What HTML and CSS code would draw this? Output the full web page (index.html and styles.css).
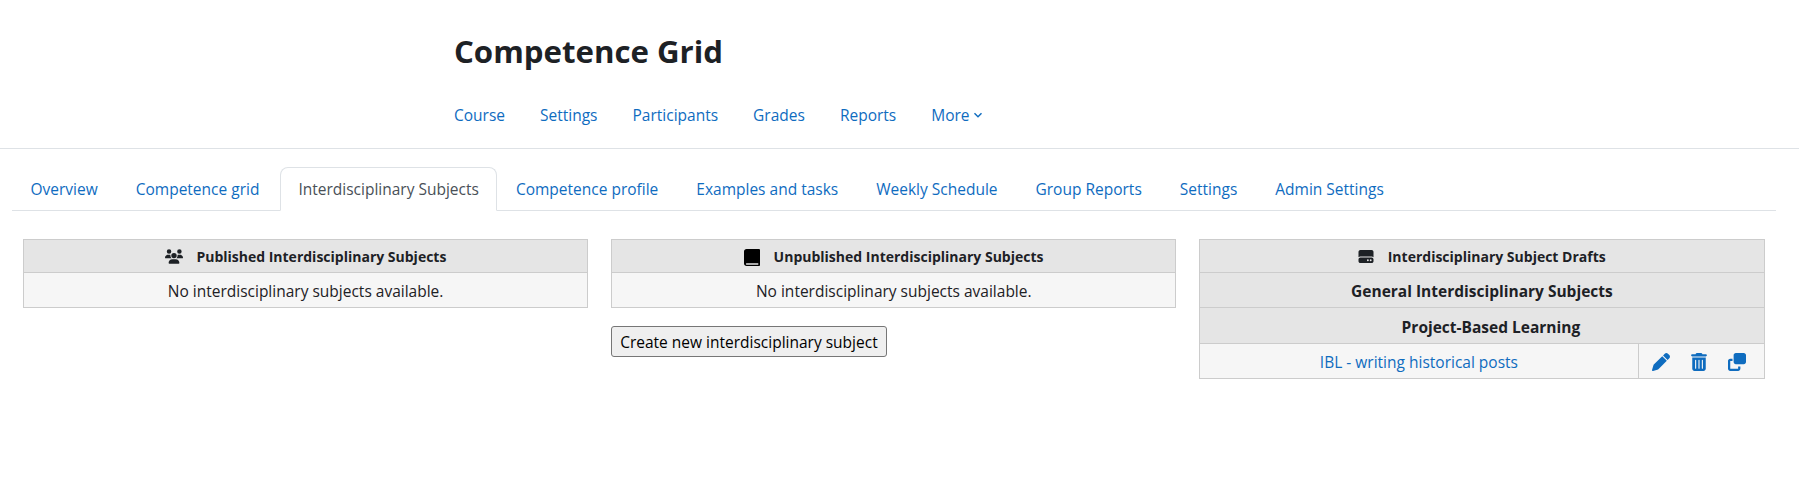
FILE: index.html
```html
<!DOCTYPE html>
<html lang="en">
<head>
<meta charset="utf-8">
<title>Competence Grid</title>
<link rel="stylesheet" href="styles.css">
</head>
<body>
<header class="page-header">
  <h1 class="title">Competence Grid</h1>
  <nav class="course-nav">
    <a href="#">Course</a>
    <a href="#">Settings</a>
    <a href="#">Participants</a>
    <a href="#">Grades</a>
    <a href="#">Reports</a>
    <a href="#" class="more">More
      <svg class="chev" viewBox="0 0 10 10"><path d="M1.5 3.2 5 6.8l3.5-3.6" fill="none" stroke="currentColor" stroke-width="1.4"/></svg>
    </a>
  </nav>
</header>
<main class="content">
  <ul class="tabs">
    <li><a href="#">Overview</a></li>
    <li><a href="#">Competence grid</a></li>
    <li class="active"><a href="#">Interdisciplinary Subjects</a></li>
    <li><a href="#">Competence profile</a></li>
    <li><a href="#">Examples and tasks</a></li>
    <li><a href="#">Weekly Schedule</a></li>
    <li><a href="#">Group Reports</a></li>
    <li><a href="#">Settings</a></li>
    <li><a href="#">Admin Settings</a></li>
  </ul>
  <div class="columns">
    <section>
      <table class="grid">
        <tr class="row-main"><th>
          <svg class="ico ico-users" viewBox="0 0 640 512"><path d="M144 0a80 80 0 1 1 0 160A80 80 0 1 1 144 0zM512 0a80 80 0 1 1 0 160A80 80 0 1 1 512 0zM0 298.7C0 239.8 47.8 192 106.7 192h42.7c15.9 0 31 3.5 44.6 9.7c-1.3 7.2-1.9 14.7-1.9 22.3c0 38.2 16.8 72.5 43.3 96c-.2 0-.4 0-.7 0H21.3C9.6 320 0 310.4 0 298.7zM405.3 320c-.2 0-.4 0-.7 0c26.6-23.5 43.3-57.8 43.3-96c0-7.6-.7-15-1.9-22.3c13.6-6.3 28.7-9.7 44.6-9.7h42.7C592.2 192 640 239.8 640 298.7c0 11.8-9.6 21.3-21.3 21.3H405.3zM224 224a96 96 0 1 1 192 0 96 96 0 1 1 -192 0zM128 485.3C128 411.7 187.7 352 261.3 352H378.7C452.3 352 512 411.7 512 485.3c0 14.7-11.9 26.7-26.7 26.7H154.7c-14.7 0-26.7-11.9-26.7-26.7z"/></svg>
          Published Interdisciplinary Subjects</th></tr>
        <tr class="row-body"><td>No interdisciplinary subjects available.</td></tr>
      </table>
    </section>
    <section>
      <table class="grid">
        <tr class="row-main"><th>
          <svg class="ico ico-book" viewBox="0 0 448 512" preserveAspectRatio="none"><path d="M72 0C32 0 0 32 0 72V440c0 40 32 72 72 72H416c17.7 0 32-14.3 32-32V32c0-17.7-14.3-32-32-32H72zm0 432H400v40H72c-11 0-20-9-20-20s9-20 20-20z"/></svg>
          Unpublished Interdisciplinary Subjects</th></tr>
        <tr class="row-body"><td>No interdisciplinary subjects available.</td></tr>
      </table>
      <button class="create" type="button">Create new interdisciplinary subject</button>
    </section>
    <section>
      <table class="grid">
        <tr class="row-main"><th colspan="2">
          <svg class="ico ico-hdd" viewBox="0 0 512 512"><path d="M0 96C0 60.7 28.7 32 64 32H448c35.3 0 64 28.7 64 64V280.4c-17-15.2-39.4-24.4-64-24.4H64c-24.6 0-47 9.2-64 24.4V96zM64 288H448c35.3 0 64 28.7 64 64v64c0 35.3-28.7 64-64 64H64c-35.3 0-64-28.7-64-64V352c0-35.3 28.7-64 64-64zM320 416a32 32 0 1 0 0-64 32 32 0 1 0 0 64zm128-32a32 32 0 1 0 -64 0 32 32 0 1 0 64 0z"/></svg>
          Interdisciplinary Subject Drafts</th></tr>
        <tr class="row-sub"><th colspan="2">General Interdisciplinary Subjects</th></tr>
        <tr class="row-sub tall"><th colspan="2">Project-Based Learning</th></tr>
        <tr class="row-body">
          <td class="name"><a href="#">IBL - writing historical posts</a></td>
          <td class="actions">
            <div class="action-list">
              <a href="#" aria-label="Edit"><svg viewBox="0 0 512 512"><path d="M362.7 19.3L314.3 67.7 444.3 197.7l48.4-48.4c25-25 25-65.5 0-90.5L453.3 19.3c-25-25-65.5-25-90.5 0zm-71 71L58.6 323.5c-10.4 10.4-18 23.3-22.2 37.4L1 481.2C-1.5 489.7 .8 498.8 7 505s15.3 8.5 23.7 6.1l120.3-35.4c14.1-4.2 27-11.8 37.4-22.2L421.7 220.3 291.7 90.3z"/></svg></a>
              <a href="#" aria-label="Delete"><svg viewBox="0 0 448 512"><path d="M135.2 17.7C140.6 6.8 151.7 0 163.8 0H284.2c12.1 0 23.2 6.8 28.6 17.7L320 32h96c17.7 0 32 14.3 32 32s-14.3 32-32 32H32C14.3 96 0 81.7 0 64S14.3 32 32 32h96l7.2-14.3zM32 128H416V448c0 35.3-28.7 64-64 64H96c-35.3 0-64-28.7-64-64V128zm96 64c-8.8 0-16 7.2-16 16V432c0 8.8 7.2 16 16 16s16-7.2 16-16V208c0-8.8-7.2-16-16-16zm96 0c-8.8 0-16 7.2-16 16V432c0 8.8 7.2 16 16 16s16-7.2 16-16V208c0-8.8-7.2-16-16-16zm96 0c-8.8 0-16 7.2-16 16V432c0 8.8 7.2 16 16 16s16-7.2 16-16V208c0-8.8-7.2-16-16-16z"/></svg></a>
              <a href="#" aria-label="Copy"><svg viewBox="0 0 512 512"><path d="M0 448c0 35.3 28.7 64 64 64H288c35.3 0 64-28.7 64-64V384H288v64H64V224h64V160H64c-35.3 0-64 28.7-64 64V448zm224-128H448c35.3 0 64-28.7 64-64V64c0-35.3-28.7-64-64-64H224c-35.3 0-64 28.7-64 64V256c0 35.3 28.7 64 64 64z"/></svg></a>
            </div>
          </td>
        </tr>
      </table>
    </section>
  </div>
</main>
</body>
</html>
```
FILE: styles.css
```css
* { box-sizing: border-box; }
html, body { margin: 0; padding: 0; }
body {
  background: #fff;
  color: #1d2125;
  font-family: "Open Sans", "Noto Sans", sans-serif;
  font-size: 15.5px;
  line-height: 22px;
  height: 493px;
  overflow: hidden;
}
a { color: #0f6cbf; text-decoration: none; }

.page-header {
  height: 149px;
  padding: 30px 0 0 454px;
  border-bottom: 1px solid #dee2e6;
}
.title {
  margin: 0;
  font-size: 31.2px;
  line-height: 42px;
  font-weight: 700;
}
.course-nav {
  display: flex;
  gap: 35px;
  margin-top: 32px;
}
.more { display: flex; align-items: center; gap: 3px; }
.chev { width: 10px; height: 10px; }

.content { padding: 18px 23px 0 11.5px; }
.tabs {
  display: flex;
  list-style: none;
  margin: 0;
  padding: 0;
  height: 44px;
  border-bottom: 1px solid #dee2e6;
}
.tabs li { height: 44px; border: 1px solid transparent; border-radius: 8px 8px 0 0; }
.tabs a { display: block; padding: 10px 18px 0; }
.tabs .active {
  margin-left: 2px;
  border-color: #dee2e6 #dee2e6 #fff;
  background: #fff;
}
.tabs .active a { color: #495057; padding-left: 17px; padding-right: 17px; }

.columns {
  display: grid;
  grid-template-columns: repeat(3, 1fr);
  gap: 23px;
  margin-top: 28px;
  padding: 0 11.5px;
}
.grid {
  width: 100%;
  border-collapse: collapse;
  text-align: center;
}
.grid th, .grid td { border: 1px solid #ccc; padding: 2px 8px 0; }
.row-main th { height: 33px; font-size: 14px; background: #e5e5e5; }
.row-sub th { height: 35px; font-size: 15.5px; background: #e5e5e5; }
.row-sub.tall th { height: 36px; padding-left: 26px; }
.row-body td { height: 35px; background: #f6f6f6; }
.ico { display: inline-block; vertical-align: -2px; margin-right: 10px; fill: #1d2125; }
.ico-users { width: 18px; height: 15px; }
.ico-book { width: 16px; height: 17px; vertical-align: -4px; fill: #000; }
.ico-hdd { width: 16px; height: 15px; }

.actions { width: 126px; }
.action-list { display: flex; gap: 20px; padding-left: 5px; }
.action-list a { display: flex; }
.action-list svg { width: 18px; height: 18px; fill: #0f6cbf; }

.create {
  display: block;
  margin-top: 18px;
  height: 31px;
  padding: 0 8px;
  font: inherit;
  color: #000;
  background: #efefef;
  border: 1px solid #767676;
  border-radius: 3px;
}
```
